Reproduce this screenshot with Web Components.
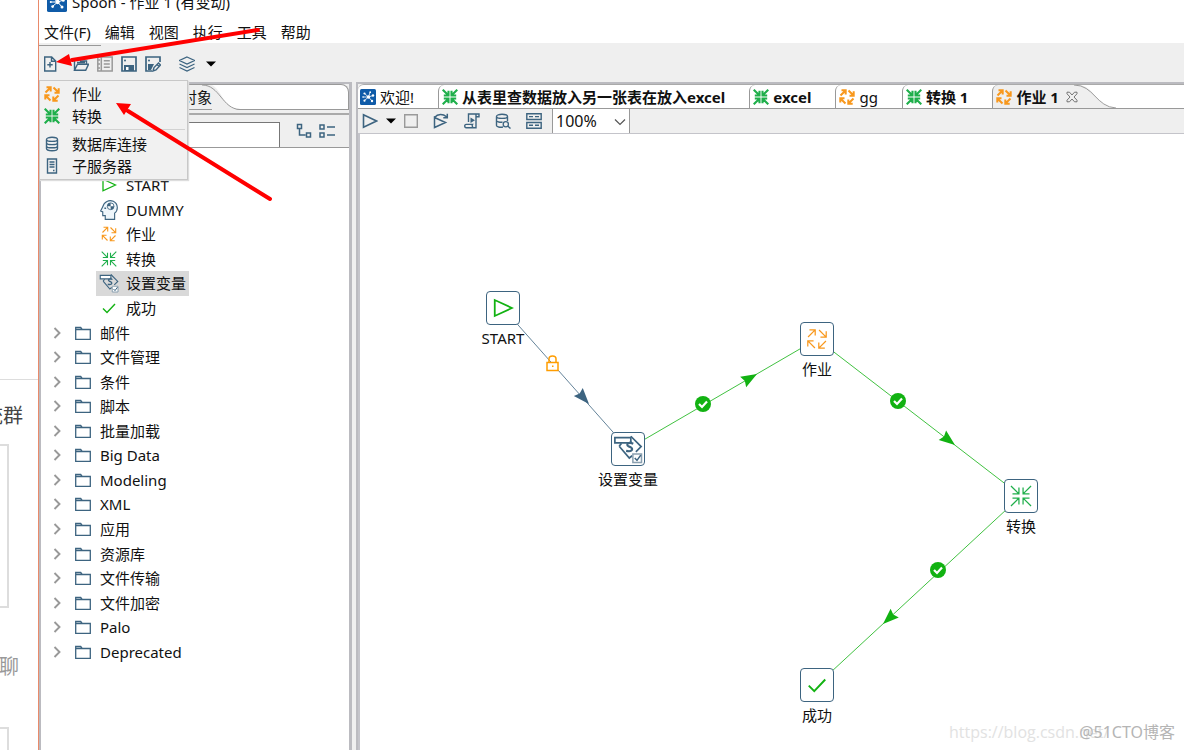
<!DOCTYPE html>
<html lang="zh-CN">
<head>
<meta charset="utf-8">
<title>Spoon</title>
<style>
  html, body { height: 100%; margin: 0; }
  body { overflow: hidden; background: #fff; color: #111; font: 15px/22px "Noto Sans", "Noto Sans CJK SC", sans-serif; }
</style>
</head>
<body>
<spoon-desktop></spoon-desktop>
<script>
const BLUE = '#3d6480', ORANGE = '#f8981d', GREEN = '#1faf4b', LIME = '#12b212';
const arrowsOut = w => `<g fill="none" stroke="${ORANGE}" stroke-width="${w}"><path d="M1.5 6.5 6.3 1.7M2.5 1.3h4.2v4.2M9.5 1.5l4.8 4.8M14.7 2.3v4.4h-4.2M14.5 9.5l-4.8 4.8M13.7 14.7H9.3v-4.2M6.5 14.5 1.7 9.7M1.3 13.5V9.3h4.2"/></g>`;
const arrowsIn = w => `<g fill="none" stroke="${GREEN}" stroke-width="${w}"><path d="M.7.7l5.4 5.4M1.8 6.5h4.7V1.8M15.3.7 9.9 6.1M14.2 6.5H9.5V1.8M.7 15.3l5.4-5.4M1.8 9.5h4.7v4.7M15.3 15.3 9.9 9.9M14.2 9.5H9.5v4.7"/></g>`;
const line = (d, c = BLUE, w = 1.4) => `<path fill="none" stroke="${c}" stroke-width="${w}" d="${d}"/>`;
const ICONS = {
  logo: `<rect width="16" height="16" rx="1.5" fill="#0f5ba8"/><g stroke="#fff" stroke-width=".8"><path d="M8.500 8 4.500 4.500M8.500 8l1.500-4.500M8.500 8l4.500-1.500M8.500 8l3.500 4M8.500 8l-4 3.500M8.500 8H3"/></g><g fill="#fff"><circle cx="8.500" cy="8" r="1.700"/><circle cx="4.500" cy="4.500" r="1.100"/><circle cx="10.200" cy="3.200" r=".9"/><circle cx="13" cy="6.500" r="1.200"/><circle cx="12" cy="12" r="1.200"/><circle cx="4.500" cy="11.700" r="1.100"/><circle cx="3" cy="8" r=".8"/></g>`,
  job: arrowsOut(2), trans: arrowsIn(2.1),
  jobThin: arrowsOut(1.1), transThin: arrowsIn(1.1),
  jobNode: arrowsOut(.9), transNode: arrowsIn(.9),
  newFile: line('M2.700 1h7l4 4v10h-11zM9.500 1v4.300h4M8 6v5.500M5.300 8.700h5.400'),
  open: line('M1.500 14V3h5l1 2h6v3M1.500 14.300l3-6h11l-2.800 6zM4 6.500h8M9 2.500h5V1'),
  book: line('M.8 1h14.400v14H.8zM4.300 1v14M6.800 4.700h6M6.800 8h6M6.800 11.300h6M1 4h2M1 8h2M1 12h2', '#999', 1.5),
  save: line('M1 1h14v14H1z', BLUE, 1.700) + `<path fill="${BLUE}" d="M3 9h10v6H3z"/><path fill="#fff" d="M5 11h2.500v3H5z"/><circle cx="4" cy="4.500" r="1" fill="${BLUE}"/>`,
  saveAs: line('M7 15H1V1h14v5', BLUE, 1.700) + `<path fill="${BLUE}" d="M3 8h6l-3 6H3z"/><circle cx="4" cy="4.500" r="1" fill="${BLUE}"/>` + line('M8 15l1-3.500 4.500-4.500 2 2L11 14zM12 8.500l2 2'),
  layers: line('M8 1l7.500 3.500L8 8 .5 4.500zM.5 8 8 11.500 15.500 8M.5 11.500 8 15l7.500-3.500', BLUE, 1.200),
  caret: `<path fill="#000" d="M3 5.500h10L8 10.500z"/>`,
  db: line('M2.500 3.500c0-3 11-3 11 0v9c0 3-11 3-11 0zM2.500 3.500c0 2.500 11 2.500 11 0M2.500 6.700c0 2.500 11 2.500 11 0M2.500 9.900c0 2.500 11 2.500 11 0'),
  server: line('M3.500 1h9v14h-9zM5.500 4h5M5.500 6.500h5M5.500 9h5M9 12.500h1.500'),
  play: line('M1.500 1.800v12.400L14.500 8z', BLUE, 1.600),
  playGreen: line('M2 2.200v11.600L14.500 8z', LIME, 1.300),
  stop: line('M1.700 1.700h12.600v12.600H1.700z', '#9a9a9a', 1.400),
  replay: line('M1.500 14.500V4.500L12.500 9.500zM1.500 4.500C5 .5 10 .8 13.500 3.800M14.300.8v3.900h-4', BLUE, 1.500),
  script: line('M4.500 9V1h10.500v2.800h-3V14.800H2.200c-2 0-2-3.400 0-3.400h6.300c-.8 1 0 3.400 1.500 3.400M12 3.800V1') + `<path fill="${BLUE}" d="M6.500 4.500v5.500L11 7.200z"/>`,
  dbSearch: line('M8 14c-3 .5-6.500 0-6.500-1.500v-9c0-3 11-3 11 0V8M1.500 3.500c0 2.500 11 2.500 11 0M1.500 7.500c0 1.500 4 2 6 1.500M12.700 13l2.800 2.500') + `<circle cx="10.800" cy="11.200" r="2.600" fill="none" stroke="${BLUE}" stroke-width="1.300"/>`,
  results: line('M.8.8h14.400v5.700H.8zM.8 9.500h14.400v5.700H.8zM3 3.600h4M9 3.600h4M3 12.300h4M9 12.300h4'),
  expand: line('M1.500 1.500h4v4h-4zM3.500 6v6h6M10.500 10h4v4h-4z', BLUE, 1.500),
  collapse: line('M1 2h4v4H1zM1 10h4v4H1zM8 4h8M8 12h8', BLUE, 1.500),
  folder: line('M.7 2.500h5l1.500 2h8.100v9.800H.7zM.7 4.500h6', BLUE, 1.300),
  chevron: line('M5.500 3l5 5-5 5', '#999', 1.900),
  down: line('M3 5.500l5 5 5-5', '#555', 1.200),
  tick: line('M2 8.500l4 4L14 4', LIME, 1.400),
  dummy: `<path fill="#eef6fb" stroke="${BLUE}" stroke-width=".9" d="M5 15.500V12.500H3V9.500L1.300 8.700 3 5.500C4 1 8-.2 11.500 1c4 2 4 7.500 1 9.500v5z"/><circle cx="9.300" cy="5" r="2.700" fill="#fff" stroke="${BLUE}" stroke-width=".7"/><path fill="${BLUE}" d="M9.300 5V2.300A2.700 2.700 0 0 0 6.600 5zM9.300 5v2.700A2.700 2.700 0 0 0 12 5zM4.300 6h1.400v1.200H4.300z"/>`,
  setvar: line('M9.500 1.200 15 6.700l-2.800 2.800M3.300 6.500l5.400 6.300 1.500-1.200M3.300 6.500 4.500 5', BLUE, .9) + `<path fill="#fff" stroke="${BLUE}" stroke-width=".9" d="M1 1.900h8.500v2.800H1z"/>` + line('M10.800 5.200C8.500 4 6.500 5.500 8.300 6.600c2.700.6 2.800 3.200-1.300 2.400M9.400 3.800v1', BLUE, 1.100) + `<path fill="#fff" stroke="#8aa0b0" stroke-width=".8" d="M10.600 10.600h4.600v4.600h-4.600z"/>` + line('M11.600 12.800l1.200 1.300 2-2.800', BLUE, .8),
  close: line('M3 3.200h2.500L8 6l2.500-2.800H13v1.600L10 8l3 3.200v1.600h-2.500L8 10l-2.500 2.800H3v-1.600L6 8 3 4.800z', '#666', .9)
};
const define = (name, css, html, after) => customElements.define(name, class extends HTMLElement {
  connectedCallback() {
    if (this.shadowRoot) return;
    const t = document.createElement('template');
    t.innerHTML = `<style>*{box-sizing:border-box}button{font:inherit;color:inherit;background:none;border:0;margin:0;padding:0;text-align:left;white-space:nowrap}${css}</style>` + (typeof html === 'function' ? html(this) : html);
    this.attachShadow({ mode: 'open' }).append(t.content.cloneNode(true));
    if (after) after(this);
  }
});

define('spoon-icon', ':host{display:block;flex:none;width:var(--size,16px);height:var(--size,16px)}svg{display:block;width:100%;height:100%}',
  el => `<svg viewBox="0 0 16 16" aria-hidden="true">${ICONS[el.getAttribute('name')]}</svg>`);

define('tool-button', ':host{display:block;flex:none;width:24px}button{display:flex;width:100%;height:24px;align-items:center;justify-content:center}',
  el => `<button aria-label="${el.getAttribute('label')}"><spoon-icon name="${el.getAttribute('icon')}"></spoon-icon></button>`);

define('page-behind', `:host{display:block;overflow:hidden;background:#fff;font-size:20px;line-height:28px;color:#444}
  .top{height:380px;border-bottom:1px solid #ddd}
  p{margin:0;white-space:nowrap;display:flex;justify-content:flex-end}
  .group{padding:22px 15px 14px 0}
  .box{width:9px;height:164px;border:2px solid #ddd;border-left:0}
  .chat{color:#999;padding:45px 19px 46px 0}`,
  `<div class="top"></div><p class="group">统群</p><div class="box"></div><p class="chat">聊</p><div class="box"></div>`);

define('title-bar', ':host{display:flex;height:20px;align-items:flex-start;gap:5px;padding-left:8px;background:#fff;overflow:hidden;--size:20px}.mark{margin-top:-8px}h1{font:inherit;margin:-10px 0 0;line-height:24px;white-space:nowrap}',
  `<spoon-icon class="mark" name="logo"></spoon-icon><h1>Spoon - 作业 1 (有变动)</h1>`);

define('menu-bar', ':host{display:block;background:#fff}nav{display:flex;gap:14px;height:23px;padding-left:5px;align-items:center}',
  `<nav>${['文件(F)', '编辑', '视图', '执行', '工具', '帮助'].map(t => `<button>${t}</button>`).join('')}</nav>`);

define('main-toolbar', ':host{display:flex;align-items:center;height:39px;padding-top:3px;position:relative}.edge{position:absolute;left:0;top:2px;width:62px;height:1px;background:#999}.a{margin-right:8px;width:22px}.b{margin-left:10px}',
  `<div class="edge"></div><tool-button class="a" icon="newFile" label="新建"></tool-button><tool-button icon="open" label="打开"></tool-button><tool-button icon="book" label="资源库"></tool-button><tool-button icon="save" label="保存"></tool-button><tool-button icon="saveAs" label="另存为"></tool-button><tool-button class="b" icon="layers" label="视角"></tool-button><tool-button icon="caret" label="选择视角"></tool-button>`);

define('new-menu', `:host{display:block;width:149px;background:#f1f1f1;border:1px solid #c8c8c8;padding:2px 0;box-shadow:1px 1px 1px #ddd}
  button{display:flex;width:100%;height:22px;align-items:center;gap:12px;padding-left:4px}
  hr{border:0;border-top:1px solid #d2d2d2;margin:2px 2px 3px 30px}`,
  `<button><spoon-icon name="job"></spoon-icon>作业</button><button><spoon-icon name="trans"></spoon-icon>转换</button><hr><button><spoon-icon name="db"></spoon-icon>数据库连接</button><button><spoon-icon name="server"></spoon-icon>子服务器</button>`);

define('tree-item', `:host{display:flex;align-items:center;min-height:0}
  button{display:flex;height:100%;align-items:center;padding-right:3px}
  .folder{padding-left:8px;gap:9px}.folder .arrow{margin-right:1px}
  .leaf{margin-left:55px;padding-left:5px;gap:9px}
  .big{--size:20px;margin:0 -2px}
  .selected{background:#d9d9d9}`,
  el => el.hasAttribute('icon')
    ? `<button class="leaf ${el.hasAttribute('selected') ? 'selected' : ''}"><spoon-icon class="${el.hasAttribute('big') ? 'big' : ''}" name="${el.getAttribute('icon')}"></spoon-icon><slot></slot></button>`
    : `<button class="folder"><spoon-icon class="arrow" name="chevron"></spoon-icon><spoon-icon name="folder"></spoon-icon><slot></slot></button>`);

define('object-panel', `:host{display:flex;flex-direction:column;min-width:0;border:2px solid #bbbbc0;border-width:2px 3px 0 2px}
  .tabs{display:flex;height:26px;flex:none;background:#fff;border:1px solid #999;border-left:0;border-radius:0 8px 0 0;margin-bottom:3px}
  .tab{padding-left:141px;background:#efefef}
  .tabs button{position:relative;height:24px}
  .tabs svg{display:block;flex:none;width:38px;height:25px;margin-left:-10px}
  .search{display:flex;flex:none;height:35px;padding-top:7px;border-top:2px solid #aaa;border-bottom:1px solid #999}
  input{font:inherit;width:239px;border:1px solid #777;border-bottom:0;background:#fff;padding:0 4px;outline:0}
  .search tool-button{margin-top:-3px;width:23px}
  .search tool-button:first-of-type{margin-left:12px}
  .tree{flex:1;background:#fff;padding-top:25px}
  .rows{display:grid;grid-auto-rows:1fr;height:491px}`,
  `<div class="tabs"><div class="tab"><button>对象</button></div><svg viewBox="0 0 38 25"><path fill="#efefef" d="M10 0C20 5 22 24 38 25H10z"/><path fill="none" stroke="#999" d="M0 0C18 0 20 24 38 24.500"/></svg></div>
   <div class="search"><input type="text" aria-label="搜索"><tool-button icon="expand" label="展开"></tool-button><tool-button icon="collapse" label="折叠"></tool-button></div>
   <div class="tree"><div class="rows">
   <tree-item icon="playGreen">START</tree-item><tree-item icon="dummy" big>DUMMY</tree-item><tree-item icon="jobThin">作业</tree-item><tree-item icon="transThin">转换</tree-item><tree-item icon="setvar" big selected>设置变量</tree-item><tree-item icon="tick">成功</tree-item>
   ${['邮件', '文件管理', '条件', '脚本', '批量加载', 'Big Data', 'Modeling', 'XML', '应用', '资源库', '文件传输', '文件加密', 'Palo', 'Deprecated'].map(t => `<tree-item>${t}</tree-item>`).join('')}
   </div></div>`);

define('editor-tab', `:host{display:flex;flex:none}
  button{display:flex;align-items:center;gap:4px;height:100%;padding:0 24px 0 3px;border-left:1px solid #999;border-top-left-radius:6px}
  :host(:first-of-type) button{border-left:0;padding-left:2px}
  .bold{font-weight:700}
  .active{background:#efefef;padding-right:0}
  .close{width:16px;margin-left:1px}
  svg{display:block;width:42px;height:100%;margin-left:-6px}`,
  el => `<button class="${el.hasAttribute('bold') ? 'bold' : ''} ${el.hasAttribute('active') ? 'active' : ''}"><spoon-icon name="${el.getAttribute('icon')}"></spoon-icon><slot></slot>${el.hasAttribute('active') ? '<spoon-icon class="close" name="close"></spoon-icon>' : ''}</button>${el.hasAttribute('active') ? '<svg viewBox="0 0 42 24" preserveAspectRatio="none"><path fill="#efefef" d="M6 0C22 3 22 23 42 24.500H6z"/><path fill="none" stroke="#999" d="M0 0C20 0 22 23 42 24"/></svg>' : ''}`);

define('job-toolbar', `:host{display:flex;height:25px;align-items:center;padding-left:1px}
  tool-button{width:21px}.wide{width:31px}.stop{width:20px;margin-right:4px}
  label{position:relative;display:block;height:24px;margin-left:3px}
  select{appearance:none;font:inherit;font-size:16px;color:inherit;width:78px;height:24px;line-height:22px;border:1px solid #999;border-top:0;border-bottom:0;background:#fff;padding:0 0 0 3px;border-radius:0}
  label spoon-icon{position:absolute;right:2px;top:5px;pointer-events:none}`,
  `<tool-button icon="play" label="运行"></tool-button><tool-button icon="caret" label="运行选项"></tool-button><tool-button class="stop" icon="stop" label="停止"></tool-button><tool-button class="wide" icon="replay" label="重放"></tool-button><tool-button class="wide" icon="script" label="SQL"></tool-button><tool-button class="wide" icon="dbSearch" label="浏览数据库"></tool-button><tool-button class="wide" icon="results" label="结果"></tool-button><label><select aria-label="缩放"><option>100%</option></select><spoon-icon name="down"></spoon-icon></label>`);

define('job-node', `:host{display:flex;flex-direction:column;align-items:center;width:34px;position:absolute}
  .box{display:flex;align-items:center;justify-content:center;width:34px;height:34px;flex:none;border:1px solid ${BLUE};border-radius:4px;background:#fff;--size:22px}
  .label{white-space:nowrap;margin-top:2px}
  .large{--size:30px}`,
  el => `<div class="box ${el.hasAttribute('large') ? 'large' : ''}"><spoon-icon name="${el.getAttribute('icon')}"></spoon-icon></div><div class="label"><slot></slot></div>`,
  el => { el.style.left = el.getAttribute('x') + 'px'; el.style.top = el.getAttribute('y') + 'px'; });

const hop = (x1, y1, x2, y2, tx, ty, c) => `<path d="M${x1} ${y1}L${x2} ${y2}" stroke="${c}" stroke-width="1" stroke-opacity=".8"/><path fill="${c}" transform="translate(${tx} ${ty}) rotate(${Math.round(Math.atan2(y2 - y1, x2 - x1) * 180 / Math.PI)})" d="M0 0-16-6-14 0-16 6z"/>`;
const ok = (x, y) => `<circle cx="${x}" cy="${y}" r="8" fill="${LIME}"/><path fill="none" stroke="#fff" stroke-width="2.200" d="M${x - 4} ${y}l3 3 5-5.500"/>`;
define('job-canvas', `:host{display:block;position:relative;overflow:hidden;background:#fff;flex:1}
  svg{position:absolute;inset:0;width:100%;height:100%}
  .mark{position:absolute;right:9px;bottom:6px;line-height:24px;color:#b5b5b5;font-size:16px}
  .link{position:absolute;right:75px;bottom:6px;line-height:24px;color:#e2e2e2;font-size:16px;font-family:"Open Sans",sans-serif;width:160px;white-space:nowrap}`,
  `<svg aria-hidden="true">${hop(143, 174, 268, 315, 229, 270, BLUE)}${hop(268, 315, 457, 205, 397, 240, LIME)}${hop(457, 205, 661, 362, 595, 311, LIME)}${hop(661, 362, 457, 551, 523, 490, LIME)}
   ${ok(343, 270)}${ok(538, 267)}${ok(578, 436)}
   <path fill="#fff" stroke="#ff9d00" stroke-width="1.500" d="M187 228.500h11v8h-11z"/><path fill="none" stroke="#ff9d00" stroke-width="1.500" d="M189 228v-3c0-4 7-4 7 0v3"/><path fill="#ff9d00" d="M192 231.500h1.500v1.500H192z"/></svg>
   <job-node x="126" y="157" icon="playGreen">START</job-node><job-node x="251" y="298" icon="setvar" large>设置变量</job-node><job-node x="440" y="188" icon="jobNode">作业</job-node><job-node x="644" y="345" icon="transNode">转换</job-node><job-node x="440" y="534" icon="tick">成功</job-node>
   <div class="link">https://blog.csdn.net/</div><div class="mark">@51CTO博客</div>`);

define('editor-pane', `:host{display:flex;flex-direction:column;min-width:0;border:2px solid #bbbbc0;border-width:2px 0 0 2px}
  .tabs{display:flex;flex:none;height:25px;background:#fff;border-top:1px solid #aaa;border-bottom:1px solid #999;border-top-left-radius:6px}
  job-toolbar{flex:none;height:24px}
  .canvas{display:flex;flex:1;border:2px solid #c4c4ca;border-width:1px 0 0 2px}`,
  `<div class="tabs"><editor-tab icon="logo">欢迎!</editor-tab><editor-tab icon="trans" bold>从表里查数据放入另一张表在放入excel</editor-tab><editor-tab icon="trans" bold>excel</editor-tab><editor-tab icon="job">gg</editor-tab><editor-tab icon="trans" bold>转换 1</editor-tab><editor-tab icon="job" bold active>作业 1</editor-tab></div>
   <job-toolbar></job-toolbar><div class="canvas"><job-canvas></job-canvas></div>`);

define('spoon-window', `:host{display:flex;flex-direction:column;min-width:0;position:relative;background:#efefef;border-left:1px solid #e98a6b}
  .work{display:grid;grid-template-columns:313px 1fr;gap:4px;flex:1;min-height:0}
  new-menu{position:absolute;left:0;top:80px}`,
  `<title-bar></title-bar><menu-bar></menu-bar><main-toolbar></main-toolbar><div class="work"><object-panel></object-panel><editor-pane></editor-pane></div><new-menu></new-menu>`);

define('red-arrows', ':host{display:block;position:absolute;left:0;top:0;pointer-events:none}svg{display:block}',
  `<svg width="280" height="210" aria-hidden="true"><g stroke="#f00" stroke-width="4" stroke-linecap="round"><path d="M258 30 72 60M270 199 128 111"/></g><path fill="#f00" d="M56 62 69 54 72 66zM116 103 131 104 124 115z"/></svg>`);

define('spoon-desktop', ':host{display:grid;grid-template-columns:38px 1fr;height:100vh;position:relative;overflow:hidden}',
  '<page-behind></page-behind><spoon-window></spoon-window><red-arrows></red-arrows>');
</script>
</body>
</html>
